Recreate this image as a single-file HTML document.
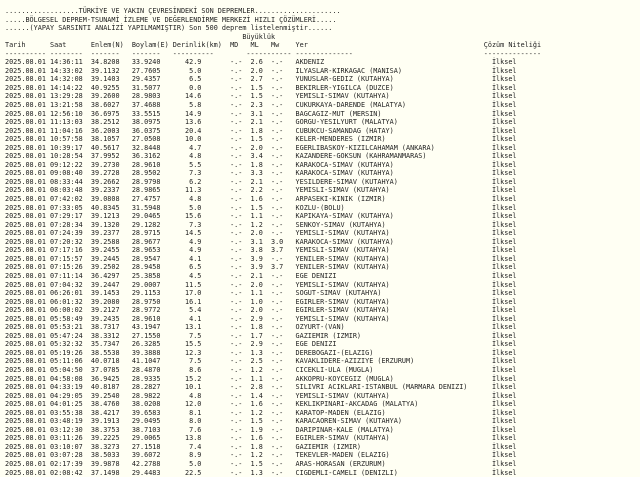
<!DOCTYPE html>
<html><head><meta charset="utf-8"><style>
html,body{margin:0;padding:0;background:#fffff3;}
body{width:640px;height:476px;overflow:hidden;font-family:"DejaVu Sans Mono","Liberation Mono",monospace;font-size:6.8px;color:#222;}
#w{position:absolute;left:5px;top:7px;}
.r{position:relative;height:8.55px;line-height:8.55px;white-space:pre;}
.r span{position:absolute;top:0;white-space:pre;}
.a{left:21ch}.b{left:31ch}.d{left:40ch;width:8ch;text-align:right}.m{left:55ch}.l{left:60ch}.w{left:65ch}.y{left:71ch}.q{left:119ch}
</style></head><body><div id="w">
<div class="r">..................TÜRKİYE VE YAKIN ÇEVRESİNDEKİ SON DEPREMLER.....................</div>
<div class="r">.....BÖLGESEL DEPREM-TSUNAMİ İZLEME VE DEĞERLENDİRME MERKEZİ HIZLI ÇÖZÜMLERİ.....</div>
<div class="r">......(YAPAY SARSINTI ANALİZİ YAPILMAMIŞTIR) Son 500 deprem listelenmiştir......</div>
<div class="r"><span style="left:58ch">Büyüklük</span></div>
<div class="r"><span style="left:0">Tarih</span><span style="left:11ch">Saat</span><span class="a">Enlem(N)</span><span class="b">Boylam(E)</span><span style="left:41ch">Derinlik(km)</span><span class="m">MD</span><span class="l">ML</span><span class="w">Mw</span><span class="y">Yer</span><span style="left:117ch">Çözüm Niteliği</span></div>
<div class="r"><span style="left:0">----------</span><span style="left:11ch">--------</span><span class="a">-------</span><span class="b">-------</span><span style="left:41ch">----------</span><span style="left:59ch">-----------</span><span class="y">--------------</span><span style="left:117ch">--------------</span></div>
<div class="r">2025.08.01 14:36:11<span class="a">34.8208</span><span class="b">33.9240</span><span class="d">42.9</span><span class="m">-.-</span><span class="l">2.6</span><span class="w">-.-</span><span class="y">AKDENIZ</span><span class="q">İlksel</span></div>
<div class="r">2025.08.01 14:33:02<span class="a">39.1132</span><span class="b">27.7605</span><span class="d">5.0</span><span class="m">-.-</span><span class="l">2.0</span><span class="w">-.-</span><span class="y">ILYASLAR-KIRKAGAC (MANISA)</span><span class="q">İlksel</span></div>
<div class="r">2025.08.01 14:32:08<span class="a">39.1403</span><span class="b">29.4357</span><span class="d">6.5</span><span class="m">-.-</span><span class="l">2.7</span><span class="w">-.-</span><span class="y">YUNUSLAR-GEDIZ (KUTAHYA)</span><span class="q">İlksel</span></div>
<div class="r">2025.08.01 14:14:22<span class="a">40.9255</span><span class="b">31.5077</span><span class="d">0.0</span><span class="m">-.-</span><span class="l">1.5</span><span class="w">-.-</span><span class="y">BEKIRLER-YIGILCA (DUZCE)</span><span class="q">İlksel</span></div>
<div class="r">2025.08.01 13:29:28<span class="a">39.2600</span><span class="b">28.9803</span><span class="d">14.6</span><span class="m">-.-</span><span class="l">1.5</span><span class="w">-.-</span><span class="y">YEMISLI-SIMAV (KUTAHYA)</span><span class="q">İlksel</span></div>
<div class="r">2025.08.01 13:21:58<span class="a">38.6027</span><span class="b">37.4688</span><span class="d">5.8</span><span class="m">-.-</span><span class="l">2.3</span><span class="w">-.-</span><span class="y">CUKURKAYA-DARENDE (MALATYA)</span><span class="q">İlksel</span></div>
<div class="r">2025.08.01 12:56:10<span class="a">36.6975</span><span class="b">33.5515</span><span class="d">14.9</span><span class="m">-.-</span><span class="l">3.1</span><span class="w">-.-</span><span class="y">BAGCAGIZ-MUT (MERSIN)</span><span class="q">İlksel</span></div>
<div class="r">2025.08.01 11:13:03<span class="a">38.2512</span><span class="b">38.0975</span><span class="d">13.6</span><span class="m">-.-</span><span class="l">2.1</span><span class="w">-.-</span><span class="y">GORGU-YESILYURT (MALATYA)</span><span class="q">İlksel</span></div>
<div class="r">2025.08.01 11:04:16<span class="a">36.2003</span><span class="b">36.0375</span><span class="d">20.4</span><span class="m">-.-</span><span class="l">1.8</span><span class="w">-.-</span><span class="y">CUBUKCU-SAMANDAG (HATAY)</span><span class="q">İlksel</span></div>
<div class="r">2025.08.01 10:57:58<span class="a">38.1057</span><span class="b">27.0508</span><span class="d">10.0</span><span class="m">-.-</span><span class="l">1.5</span><span class="w">-.-</span><span class="y">KELER-MENDERES (IZMIR)</span><span class="q">İlksel</span></div>
<div class="r">2025.08.01 10:39:17<span class="a">40.5617</span><span class="b">32.8448</span><span class="d">4.7</span><span class="m">-.-</span><span class="l">2.0</span><span class="w">-.-</span><span class="y">EGERLIBASKOY-KIZILCAHAMAM (ANKARA)</span><span class="q">İlksel</span></div>
<div class="r">2025.08.01 10:28:54<span class="a">37.9952</span><span class="b">36.3162</span><span class="d">4.8</span><span class="m">-.-</span><span class="l">3.4</span><span class="w">-.-</span><span class="y">KAZANDERE-GOKSUN (KAHRAMANMARAS)</span><span class="q">İlksel</span></div>
<div class="r">2025.08.01 09:12:22<span class="a">39.2730</span><span class="b">28.9610</span><span class="d">5.5</span><span class="m">-.-</span><span class="l">1.8</span><span class="w">-.-</span><span class="y">KARAKOCA-SIMAV (KUTAHYA)</span><span class="q">İlksel</span></div>
<div class="r">2025.08.01 09:08:40<span class="a">39.2728</span><span class="b">28.9502</span><span class="d">7.3</span><span class="m">-.-</span><span class="l">3.3</span><span class="w">-.-</span><span class="y">KARAKOCA-SIMAV (KUTAHYA)</span><span class="q">İlksel</span></div>
<div class="r">2025.08.01 08:33:44<span class="a">39.2662</span><span class="b">28.9798</span><span class="d">6.2</span><span class="m">-.-</span><span class="l">2.1</span><span class="w">-.-</span><span class="y">YESILDERE-SIMAV (KUTAHYA)</span><span class="q">İlksel</span></div>
<div class="r">2025.08.01 08:03:48<span class="a">39.2337</span><span class="b">28.9865</span><span class="d">11.3</span><span class="m">-.-</span><span class="l">2.2</span><span class="w">-.-</span><span class="y">YEMISLI-SIMAV (KUTAHYA)</span><span class="q">İlksel</span></div>
<div class="r">2025.08.01 07:42:02<span class="a">39.0808</span><span class="b">27.4757</span><span class="d">4.8</span><span class="m">-.-</span><span class="l">1.6</span><span class="w">-.-</span><span class="y">ARPASEKI-KINIK (IZMIR)</span><span class="q">İlksel</span></div>
<div class="r">2025.08.01 07:33:05<span class="a">40.8345</span><span class="b">31.5948</span><span class="d">5.0</span><span class="m">-.-</span><span class="l">1.5</span><span class="w">-.-</span><span class="y">KOZLU-(BOLU)</span><span class="q">İlksel</span></div>
<div class="r">2025.08.01 07:29:17<span class="a">39.1213</span><span class="b">29.0465</span><span class="d">15.6</span><span class="m">-.-</span><span class="l">1.1</span><span class="w">-.-</span><span class="y">KAPIKAYA-SIMAV (KUTAHYA)</span><span class="q">İlksel</span></div>
<div class="r">2025.08.01 07:28:34<span class="a">39.1320</span><span class="b">29.1282</span><span class="d">7.3</span><span class="m">-.-</span><span class="l">1.2</span><span class="w">-.-</span><span class="y">SENKOY-SIMAV (KUTAHYA)</span><span class="q">İlksel</span></div>
<div class="r">2025.08.01 07:24:39<span class="a">39.2377</span><span class="b">28.9715</span><span class="d">14.5</span><span class="m">-.-</span><span class="l">2.0</span><span class="w">-.-</span><span class="y">YEMISLI-SIMAV (KUTAHYA)</span><span class="q">İlksel</span></div>
<div class="r">2025.08.01 07:20:32<span class="a">39.2588</span><span class="b">28.9677</span><span class="d">4.9</span><span class="m">-.-</span><span class="l">3.1</span><span class="w">3.0</span><span class="y">KARAKOCA-SIMAV (KUTAHYA)</span><span class="q">İlksel</span></div>
<div class="r">2025.08.01 07:17:16<span class="a">39.2455</span><span class="b">28.9653</span><span class="d">4.9</span><span class="m">-.-</span><span class="l">3.8</span><span class="w">3.7</span><span class="y">YEMISLI-SIMAV (KUTAHYA)</span><span class="q">İlksel</span></div>
<div class="r">2025.08.01 07:15:57<span class="a">39.2445</span><span class="b">28.9547</span><span class="d">4.1</span><span class="m">-.-</span><span class="l">3.9</span><span class="w">-.-</span><span class="y">YENILER-SIMAV (KUTAHYA)</span><span class="q">İlksel</span></div>
<div class="r">2025.08.01 07:15:26<span class="a">39.2502</span><span class="b">28.9458</span><span class="d">6.5</span><span class="m">-.-</span><span class="l">3.9</span><span class="w">3.7</span><span class="y">YENILER-SIMAV (KUTAHYA)</span><span class="q">İlksel</span></div>
<div class="r">2025.08.01 07:11:14<span class="a">36.4297</span><span class="b">25.3858</span><span class="d">4.5</span><span class="m">-.-</span><span class="l">2.1</span><span class="w">-.-</span><span class="y">EGE DENIZI</span><span class="q">İlksel</span></div>
<div class="r">2025.08.01 07:04:32<span class="a">39.2447</span><span class="b">29.0007</span><span class="d">11.5</span><span class="m">-.-</span><span class="l">2.0</span><span class="w">-.-</span><span class="y">YEMISLI-SIMAV (KUTAHYA)</span><span class="q">İlksel</span></div>
<div class="r">2025.08.01 06:26:01<span class="a">39.1453</span><span class="b">29.1153</span><span class="d">17.0</span><span class="m">-.-</span><span class="l">1.1</span><span class="w">-.-</span><span class="y">SOGUT-SIMAV (KUTAHYA)</span><span class="q">İlksel</span></div>
<div class="r">2025.08.01 06:01:32<span class="a">39.2080</span><span class="b">28.9750</span><span class="d">16.1</span><span class="m">-.-</span><span class="l">1.0</span><span class="w">-.-</span><span class="y">EGIRLER-SIMAV (KUTAHYA)</span><span class="q">İlksel</span></div>
<div class="r">2025.08.01 06:00:02<span class="a">39.2127</span><span class="b">28.9772</span><span class="d">5.4</span><span class="m">-.-</span><span class="l">2.0</span><span class="w">-.-</span><span class="y">EGIRLER-SIMAV (KUTAHYA)</span><span class="q">İlksel</span></div>
<div class="r">2025.08.01 05:58:49<span class="a">39.2435</span><span class="b">28.9610</span><span class="d">4.1</span><span class="m">-.-</span><span class="l">2.9</span><span class="w">-.-</span><span class="y">YEMISLI-SIMAV (KUTAHYA)</span><span class="q">İlksel</span></div>
<div class="r">2025.08.01 05:53:21<span class="a">38.7317</span><span class="b">43.1947</span><span class="d">13.1</span><span class="m">-.-</span><span class="l">1.8</span><span class="w">-.-</span><span class="y">OZYURT-(VAN)</span><span class="q">İlksel</span></div>
<div class="r">2025.08.01 05:47:24<span class="a">38.3312</span><span class="b">27.1550</span><span class="d">7.5</span><span class="m">-.-</span><span class="l">1.7</span><span class="w">-.-</span><span class="y">GAZIEMIR (IZMIR)</span><span class="q">İlksel</span></div>
<div class="r">2025.08.01 05:32:32<span class="a">35.7347</span><span class="b">26.3285</span><span class="d">15.5</span><span class="m">-.-</span><span class="l">2.9</span><span class="w">-.-</span><span class="y">EGE DENIZI</span><span class="q">İlksel</span></div>
<div class="r">2025.08.01 05:19:26<span class="a">38.5538</span><span class="b">39.3888</span><span class="d">12.3</span><span class="m">-.-</span><span class="l">1.3</span><span class="w">-.-</span><span class="y">DEREBOGAZI-(ELAZIG)</span><span class="q">İlksel</span></div>
<div class="r">2025.08.01 05:11:06<span class="a">40.0718</span><span class="b">41.1047</span><span class="d">7.5</span><span class="m">-.-</span><span class="l">2.5</span><span class="w">-.-</span><span class="y">KAVAKLIDERE-AZIZIYE (ERZURUM)</span><span class="q">İlksel</span></div>
<div class="r">2025.08.01 05:04:50<span class="a">37.0785</span><span class="b">28.4870</span><span class="d">8.6</span><span class="m">-.-</span><span class="l">1.2</span><span class="w">-.-</span><span class="y">CICEKLI-ULA (MUGLA)</span><span class="q">İlksel</span></div>
<div class="r">2025.08.01 04:58:08<span class="a">36.9425</span><span class="b">28.9335</span><span class="d">15.2</span><span class="m">-.-</span><span class="l">1.1</span><span class="w">-.-</span><span class="y">AKKOPRU-KOYCEGIZ (MUGLA)</span><span class="q">İlksel</span></div>
<div class="r">2025.08.01 04:33:19<span class="a">40.8187</span><span class="b">28.2827</span><span class="d">10.1</span><span class="m">-.-</span><span class="l">2.8</span><span class="w">-.-</span><span class="y">SILIVRI ACIKLARI-ISTANBUL (MARMARA DENIZI)</span><span class="q">İlksel</span></div>
<div class="r">2025.08.01 04:29:05<span class="a">39.2540</span><span class="b">28.9822</span><span class="d">4.8</span><span class="m">-.-</span><span class="l">1.4</span><span class="w">-.-</span><span class="y">YEMISLI-SIMAV (KUTAHYA)</span><span class="q">İlksel</span></div>
<div class="r">2025.08.01 04:01:25<span class="a">38.4760</span><span class="b">38.0208</span><span class="d">12.0</span><span class="m">-.-</span><span class="l">1.6</span><span class="w">-.-</span><span class="y">KEKLIKPINARI-AKCADAG (MALATYA)</span><span class="q">İlksel</span></div>
<div class="r">2025.08.01 03:55:38<span class="a">38.4217</span><span class="b">39.6583</span><span class="d">8.1</span><span class="m">-.-</span><span class="l">1.2</span><span class="w">-.-</span><span class="y">KARATOP-MADEN (ELAZIG)</span><span class="q">İlksel</span></div>
<div class="r">2025.08.01 03:48:19<span class="a">39.1913</span><span class="b">29.0495</span><span class="d">8.0</span><span class="m">-.-</span><span class="l">1.5</span><span class="w">-.-</span><span class="y">KARACAOREN-SIMAV (KUTAHYA)</span><span class="q">İlksel</span></div>
<div class="r">2025.08.01 03:12:30<span class="a">38.3753</span><span class="b">38.7103</span><span class="d">7.6</span><span class="m">-.-</span><span class="l">1.9</span><span class="w">-.-</span><span class="y">DARIPINAR-KALE (MALATYA)</span><span class="q">İlksel</span></div>
<div class="r">2025.08.01 03:11:26<span class="a">39.2225</span><span class="b">29.0065</span><span class="d">13.8</span><span class="m">-.-</span><span class="l">1.6</span><span class="w">-.-</span><span class="y">EGIRLER-SIMAV (KUTAHYA)</span><span class="q">İlksel</span></div>
<div class="r">2025.08.01 03:10:07<span class="a">38.3273</span><span class="b">27.1518</span><span class="d">7.4</span><span class="m">-.-</span><span class="l">1.8</span><span class="w">-.-</span><span class="y">GAZIEMIR (IZMIR)</span><span class="q">İlksel</span></div>
<div class="r">2025.08.01 03:07:28<span class="a">38.5033</span><span class="b">39.6072</span><span class="d">8.9</span><span class="m">-.-</span><span class="l">1.2</span><span class="w">-.-</span><span class="y">TEKEVLER-MADEN (ELAZIG)</span><span class="q">İlksel</span></div>
<div class="r">2025.08.01 02:17:39<span class="a">39.9878</span><span class="b">42.2788</span><span class="d">5.0</span><span class="m">-.-</span><span class="l">1.5</span><span class="w">-.-</span><span class="y">ARAS-HORASAN (ERZURUM)</span><span class="q">İlksel</span></div>
<div class="r">2025.08.01 02:08:42<span class="a">37.1498</span><span class="b">29.4483</span><span class="d">22.5</span><span class="m">-.-</span><span class="l">1.3</span><span class="w">-.-</span><span class="y">CIGDEMLI-CAMELI (DENIZLI)</span><span class="q">İlksel</span></div>
</div></body></html>
